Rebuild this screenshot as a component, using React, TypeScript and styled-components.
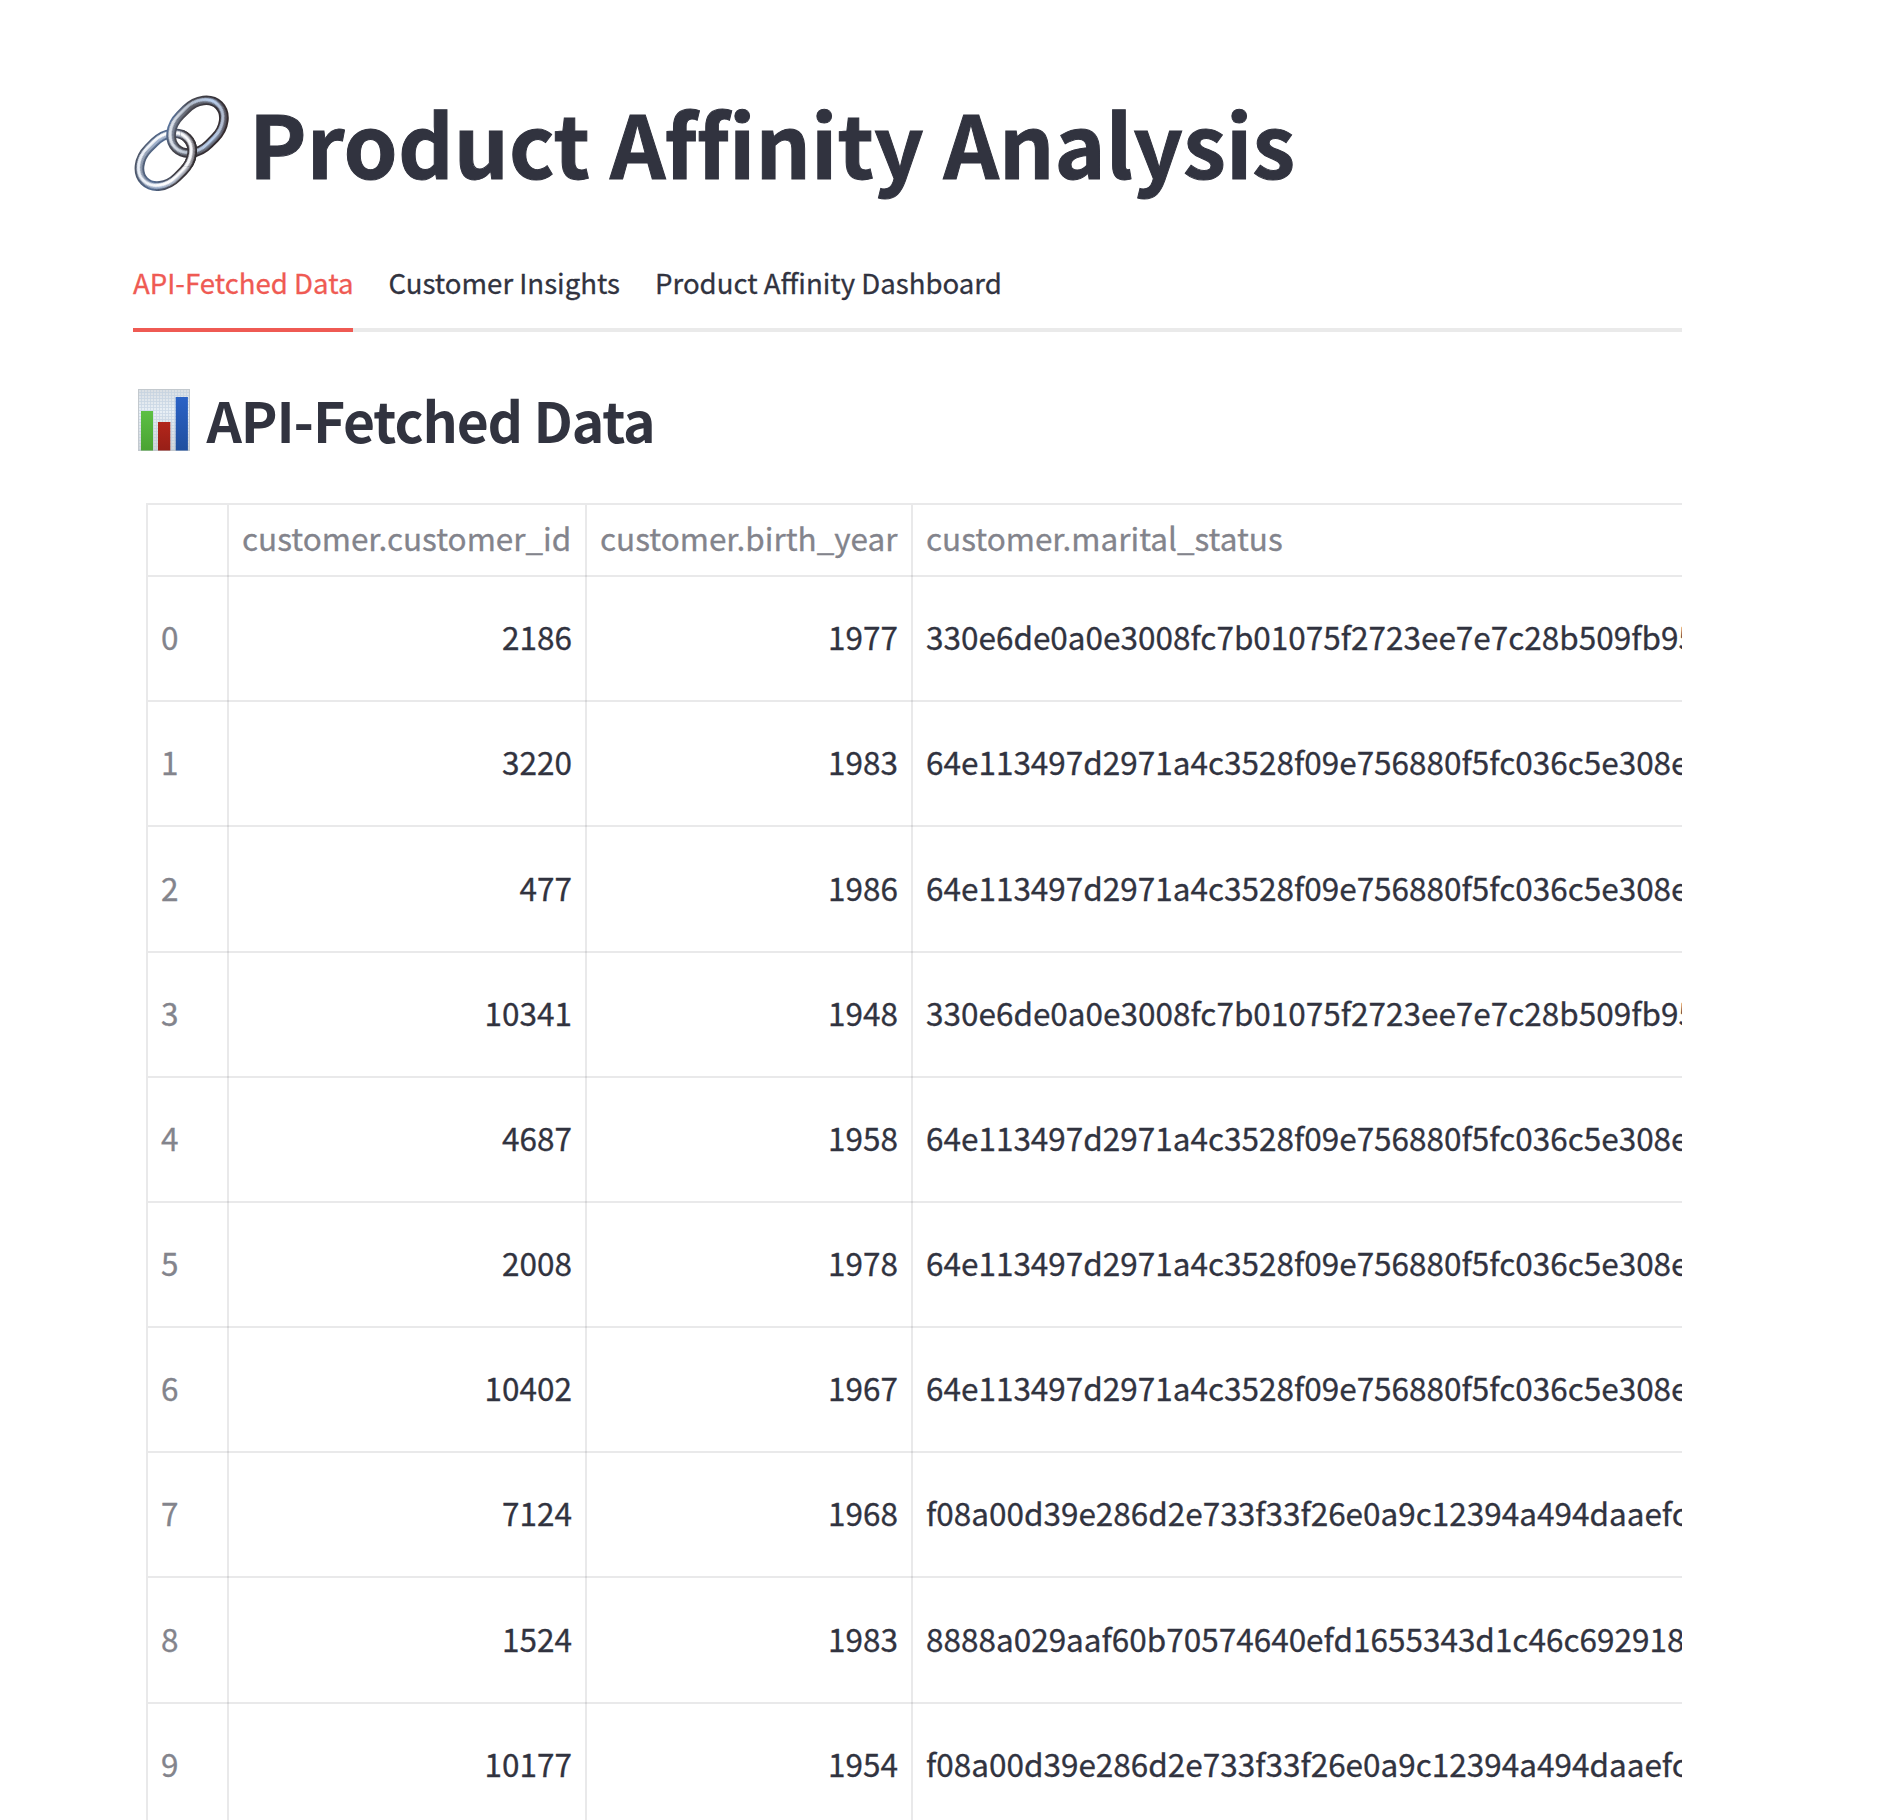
import React from 'react';
import styled, { createGlobalStyle } from 'styled-components';

const INK = '#31333f';
const MUTED = '#83848c';
const LINE = 'rgba(38, 39, 48, 0.1)';
const ACCENT = '#ef5a53';

const GlobalStyle = createGlobalStyle`
  * { box-sizing: border-box; }
  html, body { margin: 0; background: #fff; }
  body { overflow: hidden; }
`;

const Page = styled.main`
  width: 1878px;
  height: 1820px;
  padding: 84px 196px 0 133px;
  overflow: hidden;
  background: #fff;
  color: ${INK};
  font-family: 'Noto Sans CJK SC', 'Noto Sans', sans-serif;
`;

const Title = styled.h1`
  display: flex;
  align-items: center;
  gap: 20px;
  height: 116px;
  margin: 0;
  font-size: 86.5px;
  line-height: 116px;
  font-weight: 700;
  letter-spacing: 0.12px;
  -webkit-text-stroke: 1px currentColor;
  white-space: nowrap;

  svg { flex: none; width: 96px; height: 102px; margin-top: -2px; }
`;

const TabList = styled.nav`
  display: flex;
  gap: 35px;
  height: 74px;
  margin-top: 58px;
  border-bottom: 4px solid #eaeaea;
`;

const Tab = styled.button<{ $active?: boolean }>`
  height: 74px;
  padding: 4px 0 26px;
  border: 0;
  border-bottom: 4px solid ${(p) => (p.$active ? ACCENT : 'transparent')};
  background: none;
  color: ${(p) => (p.$active ? ACCENT : INK)};
  font: 400 27.6px/40px 'Noto Sans CJK SC', 'Noto Sans', sans-serif;
  -webkit-text-stroke: 0.3px currentColor;
  white-space: nowrap;
`;

const Heading = styled.h2`
  display: flex;
  align-items: center;
  gap: 15.5px;
  height: 74px;
  margin: 50px 0 0;
  padding-left: 5px;
  font-size: 55.2px;
  line-height: 74px;
  font-weight: 700;
  letter-spacing: -1.1px;
  white-space: nowrap;

  svg { flex: none; width: 53px; height: 62px; margin-top: 2px; }
`;

const Grid = styled.section`
  margin: 47px 0 0 13px;
  border-top: 2px solid ${LINE};
  border-left: 2px solid ${LINE};
  overflow: hidden;
`;

const Row = styled.div<{ $height: number }>`
  display: grid;
  grid-template-columns: 81px 358px 326px 1200px;
  height: ${(p) => p.$height}px;
  border-bottom: 2px solid ${LINE};
  font-size: 31.5px;
  line-height: 40px;
  -webkit-text-stroke: 0.3px currentColor;
`;

const Cell = styled.div<{ $numeric?: boolean; $muted?: boolean; $lift: number }>`
  display: flex;
  align-items: center;
  justify-content: ${(p) => (p.$numeric ? 'flex-end' : 'flex-start')};
  margin-bottom: -2px;
  padding: 0 13px ${(p) => p.$lift}px 13px;
  border-right: 2px solid ${LINE};
  color: ${(p) => (p.$muted ? MUTED : INK)};
  white-space: nowrap;
`;

const LinkRing = ({ cx, cy, tone }: { cx: number; cy: number; tone: string }) => {
  const ring = {
    x: cx - 91,
    y: cy - 61,
    width: 182,
    height: 122,
    rx: 78,
    ry: 61,
    transform: `rotate(-45 ${cx} ${cy})`,
  };
  return (
    <g fill="none">
      <rect {...ring} stroke={`url(#edge-${tone})`} strokeWidth="29" />
      <rect {...ring} stroke={`url(#body-${tone})`} strokeWidth="17" filter="url(#soft)" />
      <g transform="translate(-3 -2)">
        <rect {...ring} stroke={`url(#shine-${tone})`} strokeWidth="9" filter="url(#soft)" />
      </g>
    </g>
  );
};

const ChainIcon = () => (
  <svg viewBox="39 30 288 306" aria-hidden="true">
    <defs>
      <filter id="soft" x="-20%" y="-20%" width="140%" height="140%">
        <feGaussianBlur stdDeviation="2" />
      </filter>
      <linearGradient id="edge-far" gradientUnits="userSpaceOnUse" x1="190" y1="50" x2="270" y2="232">
        <stop offset="0" stopColor="#6088c2" />
        <stop offset="0.25" stopColor="#47474f" />
        <stop offset="0.6" stopColor="#332f36" />
        <stop offset="1" stopColor="#332829" />
      </linearGradient>
      <linearGradient id="body-far" gradientUnits="userSpaceOnUse" x1="150" y1="60" x2="310" y2="220">
        <stop offset="0" stopColor="#8d9bb0" />
        <stop offset="0.45" stopColor="#5d5e66" />
        <stop offset="0.75" stopColor="#737d90" />
        <stop offset="1" stopColor="#46393c" />
      </linearGradient>
      <linearGradient id="shine-far" gradientUnits="userSpaceOnUse" x1="160" y1="60" x2="310" y2="220">
        <stop offset="0" stopColor="#f4f7fc" />
        <stop offset="0.4" stopColor="#b3bdcc" />
        <stop offset="0.7" stopColor="#b9d0f0" />
        <stop offset="1" stopColor="#a9a6ac" />
      </linearGradient>
      <linearGradient id="edge-near" gradientUnits="userSpaceOnUse" x1="80" y1="150" x2="190" y2="330">
        <stop offset="0" stopColor="#4a4e5a" />
        <stop offset="0.4" stopColor="#50698f" />
        <stop offset="0.7" stopColor="#403b40" />
        <stop offset="1" stopColor="#262326" />
      </linearGradient>
      <linearGradient id="body-near" gradientUnits="userSpaceOnUse" x1="60" y1="160" x2="215" y2="320">
        <stop offset="0" stopColor="#848b98" />
        <stop offset="0.4" stopColor="#a3b5d1" />
        <stop offset="0.75" stopColor="#b2b6c0" />
        <stop offset="1" stopColor="#665b5d" />
      </linearGradient>
      <linearGradient id="shine-near" gradientUnits="userSpaceOnUse" x1="60" y1="160" x2="215" y2="320">
        <stop offset="0" stopColor="#dfe7f3" />
        <stop offset="0.5" stopColor="#ffffff" />
        <stop offset="1" stopColor="#f3f4f8" />
      </linearGradient>
      <clipPath id="overlap">
        <rect x="182" y="150" width="60" height="110" />
      </clipPath>
    </defs>
    <LinkRing cx={137.5} cy={239} tone="near" />
    <LinkRing cx={232.5} cy={140} tone="far" />
    <g clipPath="url(#overlap)">
      <LinkRing cx={137.5} cy={239} tone="near" />
    </g>
  </svg>
);

const ChartIcon = () => (
  <svg viewBox="0 0 53 62" aria-hidden="true">
    <defs>
      <linearGradient id="paper" x1="0" y1="0" x2="0" y2="1">
        <stop offset="0" stopColor="#d9dee3" />
        <stop offset="0.35" stopColor="#e9f0f6" />
        <stop offset="1" stopColor="#d0d5d9" />
      </linearGradient>
      <pattern id="mesh" width="3" height="3" patternUnits="userSpaceOnUse">
        <path d="M0 .5H3M.5 0V3" stroke="#b4c8da" strokeWidth="0.8" opacity="0.55" />
      </pattern>
      <linearGradient id="green" x1="0" y1="0" x2="0" y2="1">
        <stop offset="0" stopColor="#5cc043" />
        <stop offset="1" stopColor="#4aa333" />
      </linearGradient>
      <linearGradient id="red" x1="0" y1="0" x2="0" y2="1">
        <stop offset="0" stopColor="#b3261b" />
        <stop offset="1" stopColor="#971f17" />
      </linearGradient>
      <linearGradient id="blue" x1="0" y1="0" x2="0" y2="1">
        <stop offset="0" stopColor="#2b62c6" />
        <stop offset="1" stopColor="#1f4f9f" />
      </linearGradient>
    </defs>
    <rect width="52" height="62" fill="url(#paper)" />
    <rect width="52" height="62" fill="url(#mesh)" />
    <rect x="0.5" y="0.5" width="51" height="61" fill="none" stroke="#c3c9ce" />
    <rect x="3" y="22" width="12" height="39.5" fill="url(#green)" />
    <rect x="20" y="33" width="12.3" height="28.5" fill="url(#red)" />
    <rect x="37.7" y="8" width="12.2" height="53.5" fill="url(#blue)" />
  </svg>
);

const TABS = ['API-Fetched Data', 'Customer Insights', 'Product Affinity Dashboard'];

const COLUMNS = ['customer.customer_id', 'customer.birth_year', 'customer.marital_status'];

const HASH_A = '330e6de0a0e3008fc7b01075f2723ee7e7c28b509fb95';
const HASH_B = '64e113497d2971a4c3528f09e756880f5fc036c5e308e';
const HASH_C = 'f08a00d39e286d2e733f33f26e0a9c12394a494daaefc';
const HASH_D = '8888a029aaf60b70574640efd1655343d1c46c692918';

const ROWS: [number, number, string][] = [
  [2186, 1977, HASH_A],
  [3220, 1983, HASH_B],
  [477, 1986, HASH_B],
  [10341, 1948, HASH_A],
  [4687, 1958, HASH_B],
  [2008, 1978, HASH_B],
  [10402, 1967, HASH_B],
  [7124, 1968, HASH_C],
  [1524, 1983, HASH_D],
  [10177, 1954, HASH_C],
];

// Rows are 125.2px tall on average, so an occasional row takes the extra pixel.
const rowHeight = (i: number) => (i === 2 || i === 8 ? 126 : 125);

export default function App() {
  return (
    <Page>
      <GlobalStyle />
      <Title>
        <ChainIcon />
        <span>Product Affinity Analysis</span>
      </Title>
      <TabList>
        {TABS.map((label, i) => (
          <Tab key={label} $active={i === 0}>{label}</Tab>
        ))}
      </TabList>
      <Heading>
        <ChartIcon />
        <span>API-Fetched Data</span>
      </Heading>
      <Grid>
        <Row $height={72}>
          <Cell $lift={8} />
          {COLUMNS.map((name) => (
            <Cell key={name} $muted $lift={8}>{name}</Cell>
          ))}
        </Row>
        {ROWS.map(([id, year, hash], i) => {
          const height = rowHeight(i);
          const lift = height === 126 ? 6 : 7;
          return (
            <Row key={i} $height={height}>
              <Cell $muted $lift={lift}>{i}</Cell>
              <Cell $numeric $lift={lift}>{id}</Cell>
              <Cell $numeric $lift={lift}>{year}</Cell>
              <Cell $lift={lift}>{hash}</Cell>
            </Row>
          );
        })}
      </Grid>
    </Page>
  );
}
